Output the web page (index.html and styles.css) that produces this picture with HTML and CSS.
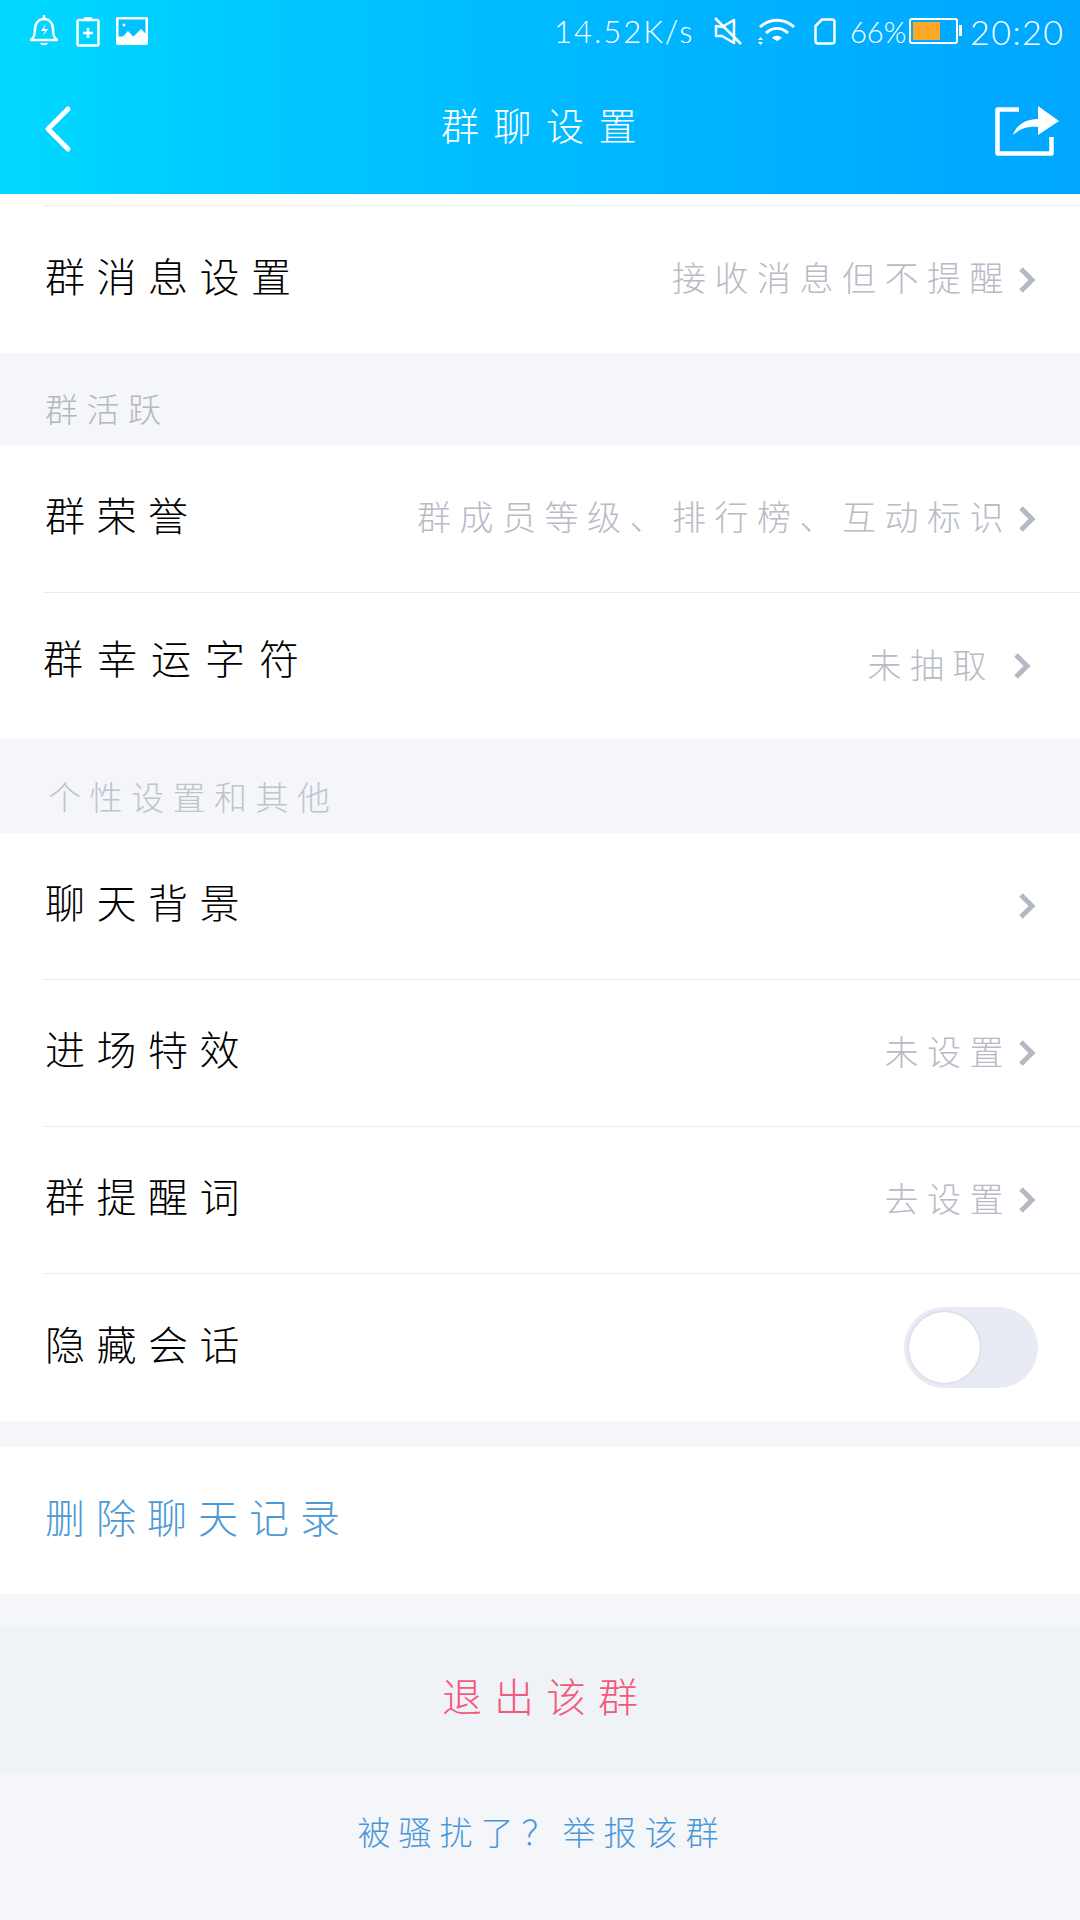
FILE: index.html
```html
<!DOCTYPE html>
<html lang="zh-CN">
<head>
    <meta charset="UTF-8">
    <meta name="viewport" content="width=device-width, initial-scale=1.0">
    <title>群聊设置</title>
    <link rel="stylesheet" href="styles.css">
</head>
<body>

    <header class="top">
        <div class="status">
            <div class="status-left">
                <svg width="32" height="34" viewBox="0 0 32 34" fill="none" stroke="#fff" stroke-width="2.5">
                    <path d="M3 26c3-3 4-5 4-11 0-6 4-10 9-10s9 4 9 10c0 6 1 8 4 11z" stroke-linejoin="round"/>
                    <path d="M18 10l-5 7h4l-2 5 5-7h-4z" fill="#fff" stroke="none"/>
                    <path d="M12 29c1 3 7 3 8 0z" fill="#fff" stroke="none"/>
                    <path d="M16 1v3"/>
                </svg>
                <svg width="24" height="31" viewBox="0 0 24 31" fill="none" stroke="#fff" stroke-width="2.5">
                    <rect x="1.5" y="4" width="21" height="25.500" rx="1.500"/>
                    <path d="M8 2.500h8M7 17h10M12 12v10"/>
                </svg>
                <svg width="32" height="28" viewBox="0 0 32 28">
                    <rect width="32" height="28" rx="2" fill="#fff"/>
                    <rect x="2.500" y="2.500" width="27" height="17" fill="#00c0ff"/>
                    <circle cx="8" cy="8" r="1.500" fill="#fff"/>
                    <path d="M2 25l10-11 10 11zM17 20l8-8 5 5v8H22z" fill="#fff"/>
                </svg>
            </div>
            <div class="status-right">
                <span class="speed">14.52K/s</span>
                <svg class="mute" width="28" height="30" viewBox="0 0 28 30" fill="none" stroke="#fff" stroke-width="2.500">
                    <path d="M2 10v10h6l12 7V4l-12 7zM1 2l26 26" stroke-linejoin="round"/>
                </svg>
                <svg class="wifi" width="38" height="30" viewBox="0 0 38 30" fill="none" stroke="#fff" stroke-width="3">
                    <path d="M2 11c10-9 24-9 34 0M8 17c7-6 15-6 22 0"/>
                    <path d="M14 22c3-3 7-3 10 0l-5 3zM0 24h5l-2.500-3zM0 26h5l-2.500 3z" fill="#fff" stroke="none"/>
                </svg>
                <svg class="sim" width="22" height="27" viewBox="0 0 22 27" fill="none" stroke="#fff" stroke-width="2.500">
                    <path d="M8 1.500h10a2.500 2.500 0 0 1 2.500 2.500v19a2.500 2.500 0 0 1-2.500 2.500H4A2.500 2.500 0 0 1 1.500 23V8z" stroke-linejoin="round"/>
                </svg>
                <span class="pct">66%</span>
                <div class="batt"><div class="batt-fill" style="width: 66%"></div></div>
                <span class="time">20:20</span>
            </div>
        </div>
        <div class="nav">
            <svg class="back" width="30" height="50" viewBox="0 0 30 50" fill="none" stroke="#fff" stroke-width="5" stroke-linecap="round" stroke-linejoin="round">
                <path d="M25 5L5 25l20 20"/>
            </svg>
            <h1 class="title">群聊设置</h1>
            <svg class="share" width="64" height="53" viewBox="0 0 64 53" fill="none">
                <path d="M24 6.500H2.500v44h54V34" stroke="#fff" stroke-width="4.500" stroke-linejoin="round"/>
                <path d="M18 32c3-10 13-16 25-16V3l21 15-21 14V24c-11-1-18 2-25 8z" fill="#fff"/>
            </svg>
        </div>
    </header>

    <section class="card card-first">
        <div class="row">
            <span class="name">群消息设置</span>
            <span class="value">接收消息但不提醒</span>
            <svg class="arrow" width="18" height="28" viewBox="0 0 18 28"><path d="M3 3l11 11L3 25"/></svg>
        </div>
    </section>

    <div class="group-title">群活跃</div>
    <section class="card">
        <div class="row">
            <span class="name">群荣誉</span>
            <span class="value">群成员等级、排行榜、互动标识</span>
            <svg class="arrow" width="18" height="28" viewBox="0 0 18 28"><path d="M3 3l11 11L3 25"/></svg>
        </div>
        <div class="row row-luck">
            <span class="name">群幸运字符</span>
            <span class="value">未抽取</span>
            <svg class="arrow" width="18" height="28" viewBox="0 0 18 28"><path d="M3 3l11 11L3 25"/></svg>
        </div>
    </section>

    <div class="group-title group-title-light">个性设置和其他</div>
    <section class="card card-other">
        <div class="row">
            <span class="name">聊天背景</span>
            <svg class="arrow" width="18" height="28" viewBox="0 0 18 28"><path d="M3 3l11 11L3 25"/></svg>
        </div>
        <div class="row">
            <span class="name">进场特效</span>
            <span class="value">未设置</span>
            <svg class="arrow" width="18" height="28" viewBox="0 0 18 28"><path d="M3 3l11 11L3 25"/></svg>
        </div>
        <div class="row">
            <span class="name">群提醒词</span>
            <span class="value">去设置</span>
            <svg class="arrow" width="18" height="28" viewBox="0 0 18 28"><path d="M3 3l11 11L3 25"/></svg>
        </div>
        <div class="row">
            <span class="name">隐藏会话</span>
            <div class="switch"><div class="knob"></div></div>
        </div>
    </section>

    <section class="card card-clear">
        <div class="row"><span class="name name-link">删除聊天记录</span></div>
    </section>

    <div class="quit">退出该群</div>
    <div class="report">被骚扰了？举报该群</div>

</body>
</html>
```

FILE: styles.css
```css
* {
    box-sizing: border-box;
}
body {
    margin: 0;
    height: 1920px;
    overflow: hidden;
    font-family: "Noto Sans CJK SC", "Noto Sans", sans-serif;
    font-weight: 300;
    background-color: #f4f6fa;
}
svg {
    display: block;
    flex-shrink: 0;
}

.top {
    height: 194px;
    padding: 14px 17px 0 28px;
    background: linear-gradient(90deg, #00d8ff 0%, #00bcff 45%, #00a6ff 100%);
    color: white;
}
.status {
    display: flex;
    justify-content: space-between;
    align-items: center;
    height: 34px;
}
.status-left {
    display: flex;
    align-items: center;
    gap: 16px;
}
.status-right {
    display: flex;
    align-items: center;
    font-family: "Lato", sans-serif;
    font-weight: 300;
    white-space: nowrap;
}
.speed {
    width: 144px;
    font-size: 31px;
    letter-spacing: 2px;
}
.mute {
    margin-left: 16px;
}
.wifi {
    margin-left: 16px;
}
.sim {
    margin-left: 18px;
}
.pct {
    width: 50px;
    margin-left: 14px;
    font-size: 29px;
}
.batt {
    position: relative;
    width: 49px;
    height: 26px;
    margin-left: 9px;
    padding: 2px;
    border: 2.500px solid white;
    border-radius: 3px;
}
.batt::after {
    content: "";
    position: absolute;
    top: 5px;
    right: -6px;
    width: 3px;
    height: 11px;
    background-color: white;
}
.batt-fill {
    height: 100%;
    background-color: #ffa726;
}
.time {
    width: 93px;
    margin-left: 12px;
    font-size: 34px;
    letter-spacing: 1.500px;
}

.nav {
    position: relative;
    display: flex;
    justify-content: space-between;
    align-items: center;
    height: 70px;
    margin-top: 46px;
    padding: 0 4px 0 15px;
}
.title {
    margin: 0;
    padding: 0 0 12px 24px;
    font-size: 38px;
    font-weight: 300;
    letter-spacing: 14.500px;
}

.card {
    background-color: white;
}
.card-first {
    padding-top: 11px;
    border: 0;
}
.card-first .row {
    height: 148px;
    border-top: 1px solid #e8ebf0;
}
.row {
    display: flex;
    align-items: center;
    height: 147px;
    margin-left: 43px;
    padding: 0 44px 0 2px;
}
.row + .row {
    border-top: 1px solid #e9ebef;
}
.card-other .row:first-child {
    height: 146px;
}
.card-other .row:last-child {
    height: 148px;
}
.name {
    flex: 1;
    padding-bottom: 10px;
    font-size: 40px;
    letter-spacing: 11.500px;
    color: #000;
}
.name-link {
    letter-spacing: 11px;
    color: #4a9ad8;
}
.value {
    padding-bottom: 6px;
    font-size: 34px;
    letter-spacing: 8.500px;
    color: #b8bbc5;
}
.arrow {
    margin-left: 6px;
    fill: none;
    stroke: #b5b9c4;
    stroke-width: 5;
}
.row-luck {
    padding-right: 49px;
}
.row-luck .name {
    margin-left: -2px;
    padding-bottom: 18px;
    letter-spacing: 14px;
}
.row-luck .value {
    margin-right: 12px;
}

.group-title {
    display: flex;
    align-items: flex-end;
    height: 92px;
    padding: 0 0 13px 45px;
    font-size: 33px;
    letter-spacing: 8.500px;
    color: #b4b7c1;
}
.group-title-light {
    height: 94px;
    padding-left: 48px;
    color: #c0c3cc;
}

.switch {
    width: 134px;
    height: 81px;
    margin-right: -2px;
    padding: 5px;
    border-radius: 41px;
    background-color: #e8ebf3;
}
.knob {
    width: 71px;
    height: 71px;
    border-radius: 50%;
    background-color: white;
    box-shadow: 0 0 3px #bfc4d0;
}

.card-clear {
    margin-top: 26px;
}
.quit {
    display: flex;
    justify-content: center;
    align-items: center;
    height: 147px;
    margin-top: 32px;
    padding: 0 0 10px 12px;
    font-size: 40px;
    letter-spacing: 12px;
    color: #f4587a;
    background-color: #eff2f7;
}
.report {
    padding-top: 34px;
    padding-left: 4px;
    text-align: center;
    font-size: 33px;
    letter-spacing: 8px;
    color: #4a96d8;
}
```
